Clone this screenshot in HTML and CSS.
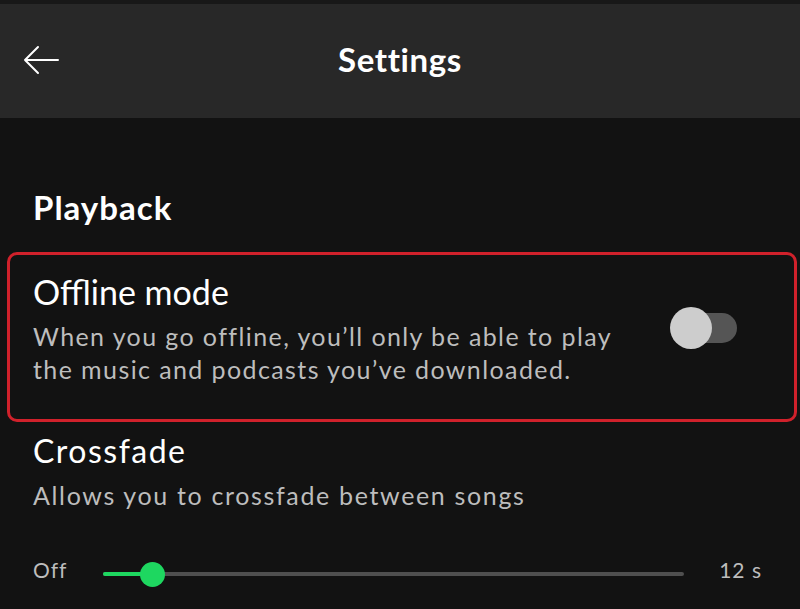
FILE: index.html
```html
<!DOCTYPE html>
<html lang="en">
<head>
    <meta charset="UTF-8">
    <meta name="viewport" content="width=device-width, initial-scale=1.0">
    <title>Settings</title>
    <link rel="stylesheet" href="styles.css">
</head>
<body>
    <div class="top-strip"></div>
    <header class="header">
        <button class="back" aria-label="Back">
            <svg width="38" height="30" viewBox="0 0 38 30">
                <path d="M36 15H3M16 2L3 15l13 13" fill="none" stroke="#fff" stroke-width="2" stroke-linecap="round" stroke-linejoin="round"/>
            </svg>
        </button>
        <h1 class="title">Settings</h1>
    </header>
    <main class="content">
        <h2 class="section-title">Playback</h2>
        <div class="setting highlighted">
            <div class="setting-text">
                <div class="setting-name">Offline mode</div>
                <div class="setting-desc">When you go offline, you’ll only be able to play the music and podcasts you’ve downloaded.</div>
            </div>
            <div class="toggle">
                <div class="toggle-thumb"></div>
            </div>
        </div>
        <div class="setting crossfade">
            <div class="setting-text">
                <div class="setting-name wide">Crossfade</div>
                <div class="setting-desc wide">Allows you to crossfade between songs</div>
            </div>
        </div>
        <div class="slider-row">
            <span class="slider-label">Off</span>
            <div class="slider">
                <div class="slider-fill" style="width: 49px"></div>
                <div class="slider-thumb" style="left: 49px"></div>
            </div>
            <span class="slider-label">12 s</span>
        </div>
    </main>
</body>
</html>
```

FILE: styles.css
```css
body, html {
    margin: 0;
    height: 100%;
    background-color: #121212;
    font-family: Lato, "Noto Sans", sans-serif;
    color: #fff;
    overflow: hidden;
}
.top-strip {
    height: 4px;
    background-color: #181818;
}
.header {
    height: 114px;
    background-color: #282828;
    display: flex;
    align-items: center;
    justify-content: center;
    position: relative;
}
.back {
    position: absolute;
    left: 22px;
    top: 41px;
    background: none;
    border: none;
    padding: 0;
    display: flex;
}
.title {
    margin: 0 0 4px;
    font-size: 33px;
    line-height: 33px;
    font-weight: 700;
    letter-spacing: 0.6px;
}
.content {
    padding-top: 69px;
}
.section-title {
    margin: 0 0 25px 33px;
    font-size: 33px;
    line-height: 40px;
    font-weight: 700;
    letter-spacing: 1px;
}
.setting {
    display: flex;
}
.highlighted {
    margin: 0 3px 0 7px;
    padding: 17px 0 33px 23px;
    border: 3px solid #d0212b;
    border-radius: 10px;
}
.setting-text {
    flex: 1;
}
.setting-name {
    font-size: 34px;
    line-height: 40px;
    margin-bottom: 8px;
}
.setting-desc {
    font-size: 25px;
    line-height: 33px;
    color: #bdbdbd;
    letter-spacing: 1.4px;
    max-width: 610px;
}
.crossfade .setting-name {
    font-size: 32px;
    margin-bottom: 8px;
}
.setting-name.wide {
    letter-spacing: 1.5px;
}
.setting-desc.wide {
    letter-spacing: 1.65px;
    max-width: none;
}
.toggle {
    width: 57px;
    height: 30px;
    margin: 41px 57px 0 0;
    border-radius: 15px;
    background-color: #555555;
    position: relative;
}
.toggle-thumb {
    position: absolute;
    left: -10px;
    top: -6px;
    width: 42px;
    height: 42px;
    border-radius: 50%;
    background-color: #cdcdcd;
}
.crossfade {
    padding: 9px 0 0 33px;
}
.slider-row {
    display: flex;
    align-items: center;
    height: 26px;
    padding: 49px 38px 0 33px;
}
.slider-label {
    font-size: 21px;
    line-height: 26px;
    color: #bdbdbd;
    letter-spacing: 1px;
    margin-bottom: 8px;
}
.slider {
    flex: 1;
    height: 4px;
    margin: 0 35px 0 36px;
    border-radius: 2px;
    background-color: #4f4f4f;
    position: relative;
}
.slider-fill {
    height: 100%;
    border-radius: 2px;
    background-color: #1ed760;
}
.slider-thumb {
    position: absolute;
    top: -10px;
    width: 25px;
    height: 25px;
    margin-left: -12px;
    border-radius: 50%;
    background-color: #1ed760;
}
```
